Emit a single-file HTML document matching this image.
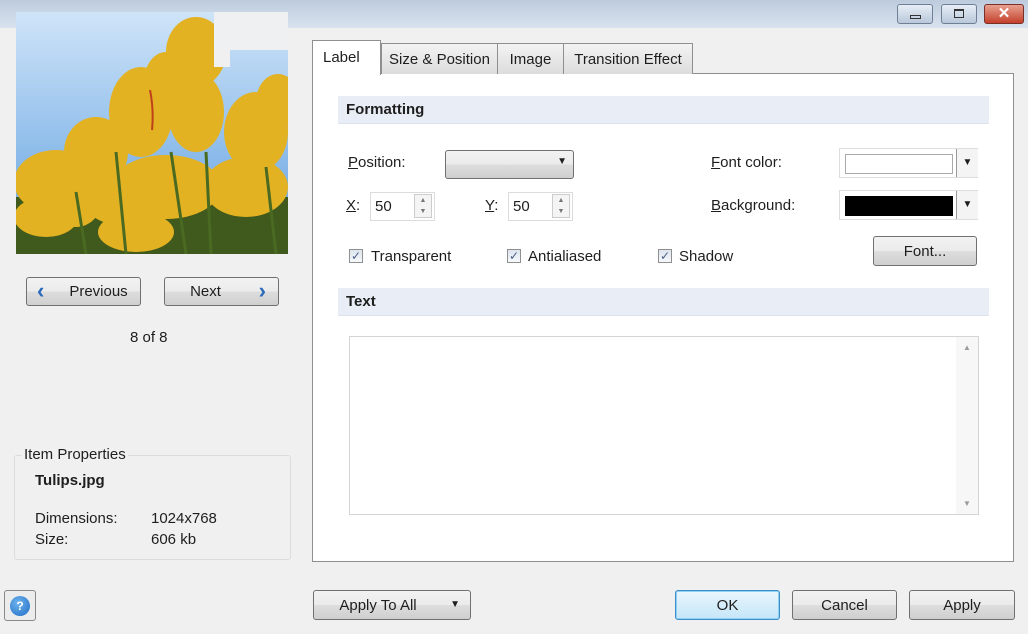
<!DOCTYPE html>
<html><head><style>
*{box-sizing:border-box;margin:0;padding:0}
body{width:1028px;height:634px;background:#f0f0f0;font-family:"Liberation Sans",sans-serif;font-size:15px;color:#1e1e1e;position:relative;overflow:hidden}
.a{position:absolute}
.btn{position:absolute;border:1px solid #707070;border-radius:3px;background:linear-gradient(#f2f2f2 0%,#ebebeb 50%,#dddddd 51%,#cfcfcf 100%);text-align:center;font-size:15px}
.hdr{position:absolute;left:338px;width:651px;height:28px;background:#e9eef6;border-bottom:1px solid #d9e2ee;font-weight:bold;font-size:15px;padding:5px 0 0 8px}
.tab{position:absolute;top:43px;height:31px;border:1px solid #8e8f8f;border-bottom:none;background:linear-gradient(#f3f3f3,#dcdcdc);font-size:15px;padding-top:7px;text-align:center}
.cb{position:absolute;width:14px;height:14px;border:1px solid #8f8f8f;background:linear-gradient(#dde4ee,#f6f8fb);font-size:12px;line-height:12px;text-align:center;color:#4a5f86}
u{text-decoration:underline}
</style></head><body>
<div class="a" style="left:0;top:0;width:1028px;height:28px;background:linear-gradient(#bccbdd,#d9e3ef)"></div>
<div class="a" style="left:897px;top:4px;width:36px;height:20px;border:1px solid #6f7f95;border-radius:3px;background:linear-gradient(#e6edf6,#b9c8da)"><div class="a" style="left:12px;top:10px;width:11px;height:4px;border:1px solid #333"></div></div>
<div class="a" style="left:941px;top:4px;width:36px;height:20px;border:1px solid #6f7f95;border-radius:3px;background:linear-gradient(#e6edf6,#b9c8da)"><div class="a" style="left:12px;top:4px;width:10px;height:9px;border:1px solid #333;border-top-width:2px"></div></div>
<div class="a" style="left:984px;top:4px;width:40px;height:20px;border:1px solid #7a3026;border-radius:3px;background:linear-gradient(#e8a090,#c4412c);color:#fff;font-weight:bold;text-align:center;font-size:15px;line-height:18px">✕</div>

<svg class="a" style="left:16px;top:12px" width="272" height="242" viewBox="0 0 272 242">
<defs><linearGradient id="s" x1="0" y1="0" x2="0" y2="1"><stop offset="0" stop-color="#cfe4f8"/><stop offset="1" stop-color="#5e9fe0"/></linearGradient></defs>
<rect width="272" height="242" fill="url(#s)"/>
<rect x="0" y="185" width="272" height="57" fill="#3f5a1c"/>
<g fill="#e3b222">
<ellipse cx="40" cy="170" rx="42" ry="32"/><ellipse cx="80" cy="140" rx="32" ry="35"/><ellipse cx="125" cy="100" rx="32" ry="45"/>
<ellipse cx="180" cy="100" rx="28" ry="40"/><ellipse cx="180" cy="40" rx="30" ry="35"/><ellipse cx="240" cy="120" rx="32" ry="40"/>
<ellipse cx="150" cy="175" rx="55" ry="32"/><ellipse cx="230" cy="175" rx="42" ry="30"/><ellipse cx="30" cy="205" rx="32" ry="20"/>
<ellipse cx="120" cy="220" rx="38" ry="20"/><ellipse cx="262" cy="90" rx="22" ry="28"/><ellipse cx="100" cy="190" rx="30" ry="22"/>
<ellipse cx="150" cy="70" rx="22" ry="30"/><ellipse cx="60" cy="190" rx="25" ry="25"/>
</g>
<path d="M134 78 q4 20 2 40" stroke="#c0401a" stroke-width="2" fill="none"/>
<g stroke="#4a6a22" stroke-width="3"><line x1="100" y1="140" x2="110" y2="242"/><line x1="155" y1="140" x2="170" y2="242"/><line x1="190" y1="140" x2="195" y2="242"/><line x1="250" y1="155" x2="260" y2="242"/><line x1="60" y1="180" x2="70" y2="242"/></g>
<rect x="198" y="0" width="16" height="55" fill="#f0f0f0"/><rect x="198" y="0" width="74" height="38" fill="#eef0f2"/>
</svg>

<div class="btn" style="left:26px;top:277px;width:115px;height:29px;padding-top:5px"><span style="position:absolute;left:10px;top:0;color:#2a6ab8;font-size:22px;font-weight:bold">‹</span><span style="margin-left:30px">Previous</span></div>
<div class="btn" style="left:164px;top:277px;width:115px;height:29px;padding-top:5px"><span style="margin-right:32px">Next</span><span style="position:absolute;right:12px;top:0;color:#2a6ab8;font-size:22px;font-weight:bold">›</span></div>
<div class="a" style="left:130px;top:329px">8 of 8</div>

<div class="a" style="left:14px;top:455px;width:277px;height:105px;border:1px solid #dcdcdc;border-radius:3px"></div>
<div class="a" style="left:22px;top:446px;background:#f0f0f0;padding:0 2px">Item Properties</div>
<div class="a" style="left:35px;top:472px;font-weight:bold">Tulips.jpg</div>
<div class="a" style="left:35px;top:510px">Dimensions:</div><div class="a" style="left:151px;top:510px">1024x768</div>
<div class="a" style="left:35px;top:531px">Size:</div><div class="a" style="left:151px;top:531px">606 kb</div>

<div class="a" style="left:312px;top:73px;width:702px;height:489px;background:#fff;border:1px solid #8e8f8f"></div>
<div class="tab" style="left:381px;width:117px">Size &amp; Position</div>
<div class="tab" style="left:497px;width:67px">Image</div>
<div class="tab" style="left:563px;width:130px">Transition Effect</div>
<div class="a" style="left:312px;top:40px;width:69px;height:35px;background:#fff;border:1px solid #8e8f8f;border-bottom:none;padding:8px 0 0 10px">Label</div>

<div class="hdr" style="top:96px">Formatting</div>
<div class="a" style="left:348px;top:154px"><u>P</u>osition:</div>
<div class="btn" style="left:445px;top:150px;width:129px;height:29px"><span style="position:absolute;right:6px;top:5px;font-size:10px">▼</span></div>
<div class="a" style="left:711px;top:154px"><u>F</u>ont color:</div>
<div class="a" style="left:839px;top:148px;width:139px;height:30px;border:1px solid #ddd;background:#fff"><div class="a" style="left:5px;top:5px;width:108px;height:20px;border:1px solid #aaa;background:#fff"></div><div class="a" style="left:116px;top:0;width:22px;height:28px;border-left:1px solid #999;background:#f4f4f4;font-size:10px;text-align:center;padding-top:8px">▼</div></div>
<div class="a" style="left:711px;top:197px"><u>B</u>ackground:</div>
<div class="a" style="left:839px;top:190px;width:139px;height:30px;border:1px solid #ddd;background:#fff"><div class="a" style="left:5px;top:5px;width:108px;height:20px;background:#000"></div><div class="a" style="left:116px;top:0;width:22px;height:28px;border-left:1px solid #999;background:#f4f4f4;font-size:10px;text-align:center;padding-top:8px">▼</div></div>

<div class="a" style="left:346px;top:197px"><u>X</u>:</div>
<div class="a" style="left:370px;top:192px;width:65px;height:29px;border:1px solid #dcdcdc;padding:5px 0 0 4px">50</div>
<div class="a" style="left:414px;top:194px;width:18px;height:24px;border:1px solid #ccc;background:#f4f4f4;font-size:7px;color:#777;text-align:center;line-height:11px">▲<br>▼</div>
<div class="a" style="left:485px;top:197px"><u>Y</u>:</div>
<div class="a" style="left:508px;top:192px;width:65px;height:29px;border:1px solid #dcdcdc;padding:5px 0 0 4px">50</div>
<div class="a" style="left:552px;top:194px;width:18px;height:24px;border:1px solid #ccc;background:#f4f4f4;font-size:7px;color:#777;text-align:center;line-height:11px">▲<br>▼</div>

<div class="cb" style="left:349px;top:249px">✓</div><div class="a" style="left:371px;top:248px">Transparent</div>
<div class="cb" style="left:507px;top:249px">✓</div><div class="a" style="left:528px;top:248px">Antialiased</div>
<div class="cb" style="left:658px;top:249px">✓</div><div class="a" style="left:679px;top:248px">Shadow</div>
<div class="btn" style="left:873px;top:236px;width:104px;height:30px;padding-top:6px">Font...</div>

<div class="hdr" style="top:288px">Text</div>
<div class="a" style="left:349px;top:336px;width:630px;height:179px;border:1px solid #d5d5d5;background:#fff"><div class="a" style="right:0;top:0;width:22px;height:177px;background:#f7f7f7;font-size:8px;color:#999;text-align:center"><div style="padding-top:6px">▲</div><div style="position:absolute;bottom:6px;width:22px">▼</div></div></div>

<div class="a" style="left:4px;top:590px;width:32px;height:31px;border:1px solid #8a8a8a;border-radius:3px;background:#ececec"><div class="a" style="left:5px;top:5px;width:20px;height:20px;border-radius:50%;background:radial-gradient(circle at 40% 35%,#6fb4ef,#1e6cc4);color:#fff;font-weight:bold;font-size:12px;text-align:center;line-height:20px">?</div></div>
<div class="btn" style="left:313px;top:590px;width:158px;height:30px;padding-top:6px"><span style="margin-right:28px">Apply To All</span><span style="position:absolute;right:10px;top:8px;font-size:10px">▼</span></div>
<div class="btn" style="left:675px;top:590px;width:105px;height:30px;padding-top:6px;border-color:#3c8fc9;box-shadow:0 0 0 1px #8fd0f4 inset;background:linear-gradient(#e9f6fd,#c4e6f8)">OK</div>
<div class="btn" style="left:792px;top:590px;width:105px;height:30px;padding-top:6px">Cancel</div>
<div class="btn" style="left:909px;top:590px;width:106px;height:30px;padding-top:6px">Apply</div>
</body></html>
